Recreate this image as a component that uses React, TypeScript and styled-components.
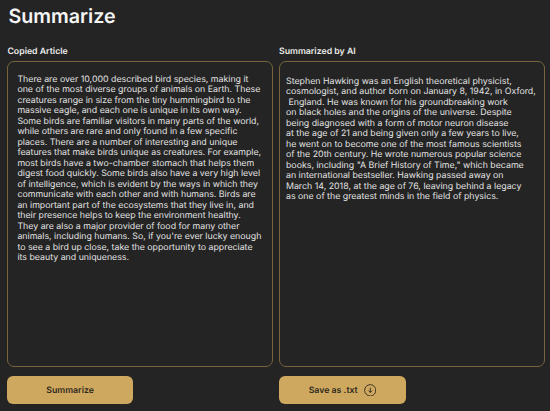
import React from 'react';
import styled, { createGlobalStyle } from 'styled-components';

const GlobalStyle = createGlobalStyle`
  * { box-sizing: border-box; }
  body { margin: 0; background: #242424; color: #e2e2e2; font-family: Inter, sans-serif; overflow: hidden; text-rendering: geometricPrecision; }
`;

const Page = styled.main`
  height: 411px;
  padding: 3px 5px 0 7.4px;
`;

const Title = styled.h1`
  margin: 0 0 0 1px;
  height: 42px;
  font-size: 19.7px;
  line-height: 27px;
  font-weight: 600;
  color: #f5f5f5;
`;

const Columns = styled.div`
  display: grid;
  grid-template-columns: 265.6px 265.6px;
  column-gap: 6px;
`;

const Column = styled.section`
  display: flex;
  flex-direction: column;
  align-items: flex-start;
`;

const Label = styled.h2`
  margin: 0;
  height: 16px;
  font-size: 8.75px;
  line-height: 14px;
  font-weight: 600;
  color: #ececec;
`;

const Panel = styled.div<{ $top: number; $left: number }>`
  width: 100%;
  height: 306px;
  border: 1px solid #79643d;
  border-radius: 7px;
  padding: ${(p) => p.$top}px 0 0 ${(p) => p.$left}px;
`;

const Line = styled.div`
  height: 10.48px;
  font-size: 8.8px;
  line-height: 10.48px;
  white-space: pre;
`;

const Button = styled.button<{ $width: number }>`
  display: flex;
  align-items: center;
  justify-content: center;
  gap: 6px;
  margin-top: 9.4px;
  width: ${(p) => p.$width}px;
  height: 27.6px;
  padding: 0;
  border: 0;
  border-radius: 6px;
  background: #cfa85f;
  color: #2e281e;
  font: 600 8.75px/12px Inter, sans-serif;
  text-rendering: inherit;
`;

const ButtonText = styled.span`
  padding-top: 1.6px;
`;

const article = [
  'There are over 10,000 described bird species, making it',
  'one of the most diverse groups of animals on Earth. These',
  'creatures range in size from the tiny hummingbird to the',
  'massive eagle, and each one is unique in its own way.',
  'Some birds are familiar visitors in many parts of the world,',
  'while others are rare and only found in a few specific',
  'places. There are a number of interesting and unique',
  'features that make birds unique as creatures. For example,',
  'most birds have a two-chamber stomach that helps them',
  'digest food quickly. Some birds also have a very high level',
  'of intelligence, which is evident by the ways in which they',
  'communicate with each other and with humans. Birds are',
  'an important part of the ecosystems that they live in, and',
  'their presence helps to keep the environment healthy.',
  'They are also a major provider of food for many other',
  "animals, including humans. So, if you're ever lucky enough",
  'to see a bird up close, take the opportunity to appreciate',
  'its beauty and uniqueness.',
];

const summary = [
  'Stephen Hawking was an English theoretical physicist,',
  'cosmologist, and author born on January 8, 1942, in Oxford,',
  ' England. He was known for his groundbreaking work',
  'on black holes and the origins of the universe. Despite',
  'being diagnosed with a form of motor neuron disease',
  'at the age of 21 and being given only a few years to live,',
  'he went on to become one of the most famous scientists',
  'of the 20th century. He wrote numerous popular science',
  'books, including "A Brief History of Time," which became',
  'an international bestseller. Hawking passed away on',
  'March 14, 2018, at the age of 76, leaving behind a legacy',
  'as one of the greatest minds in the field of physics.',
];

function DownloadIcon() {
  return (
    <svg width="12.6" height="12.6" viewBox="0 0 12 12" fill="none" stroke="#2e281e" strokeWidth="0.85" strokeLinecap="round" strokeLinejoin="round">
      <circle cx="6" cy="6" r="5.4" />
      <path d="M6 3.9v4M4.5 6.5L6 8l1.5-1.5" />
    </svg>
  );
}

export default function App() {
  return (
    <Page>
      <GlobalStyle />
      <Title>Summarize</Title>
      <Columns>
        <Column>
          <Label>Copied Article</Label>
          <Panel $top={13} $left={9}>
            {article.map((t) => <Line key={t}>{t}</Line>)}
          </Panel>
          <Button $width={125.4}><ButtonText>Summarize</ButtonText></Button>
        </Column>
        <Column>
          <Label>Summarized by AI</Label>
          <Panel $top={15} $left={6}>
            {summary.map((t) => <Line key={t}>{t}</Line>)}
          </Panel>
          <Button $width={127}>
            <ButtonText>Save as .txt</ButtonText>
            <DownloadIcon />
          </Button>
        </Column>
      </Columns>
    </Page>
  );
}
